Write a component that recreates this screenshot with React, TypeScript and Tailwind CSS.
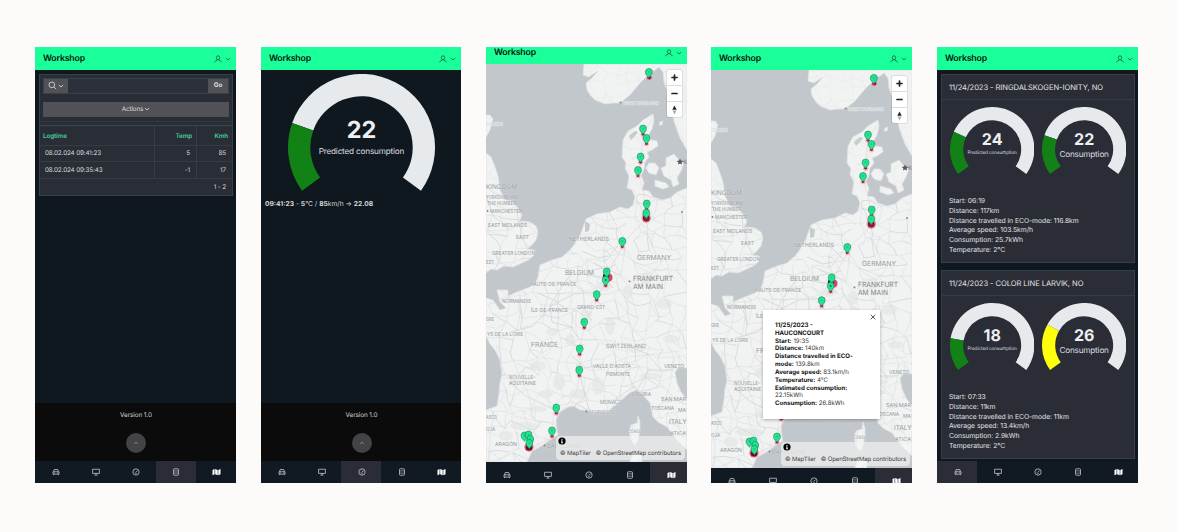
import React, { useId } from "react";

type IconName = "car" | "desktop" | "dash" | "list" | "map";

function NavIcon({ name }: { name: IconName }) {
  const common = { width: 8, height: 8, viewBox: "0 0 16 16", fill: "none", stroke: "currentColor", strokeWidth: 1.7 } as const;
  switch (name) {
    case "car":
      return (
        <svg {...common}>
          <path d="M3 7.500 4.600 3h6.800L13 7.500M2 7.500h12v4.700H2zM3.200 12v2.200M12.800 12v2.200" />
          <path d="M3.600 9.900h2M10.400 9.900h2" />
        </svg>
      );
    case "desktop":
      return (
        <svg {...common}>
          <path d="M1.200 2.500h13.600v8.300H1.200z" />
          <path d="M8 11v3M5 14.200h6" />
        </svg>
      );
    case "dash":
      return (
        <svg {...common}>
          <circle cx="8" cy="8" r="6.300" />
          <path d="M7.400 9.200 11 5.200" strokeWidth="1.800" />
          <path d="M4.400 8.600h.8M6 5.300l.5.600M6 11.300h4" strokeWidth="1.200" />
        </svg>
      );
    case "list":
      return (
        <svg {...common}>
          <rect x="3" y="1.500" width="10" height="13" rx="1.500" />
          <path d="M3 5.800h10M3 10.200h10" strokeWidth="1.300" />
        </svg>
      );
    case "map":
      return (
        <svg width={9} height={8} viewBox="0 0 18 16" fill="#fff">
          <path d="M1 4 5.200 2v10.600L1 14.400zM6.400 2l5 2v10.600l-5-2zM12.600 4 17 2v10.400l-4.400 2.200z" />
        </svg>
      );
  }
}

const NAV: IconName[] = ["car", "desktop", "dash", "list", "map"];

function BottomNav({ active, className = "h-[22px]" }: { active: IconName; className?: string }) {
  return (
    <nav className={`grid shrink-0 grid-cols-5 bg-[#111a22] text-[#b9bcc0] ${className}`}>
      {NAV.map((n) => (
        <div key={n} className={n === active ? "flex items-center justify-center bg-[#2a2d36] pl-px" : "flex items-center justify-center pl-px"}>
          <NavIcon name={n} />
        </div>
      ))}
    </nav>
  );
}

function Chevron({ up = false, className = "" }: { up?: boolean; className?: string }) {
  return (
    <svg width="6" height="6" viewBox="0 0 12 12" fill="none" stroke="currentColor" strokeWidth="1.700" className={className}>
      <path d={up ? "M2.5 7.5 6 4.3l3.5 3.2" : "M1.8 4.2 6 8l4.2-3.8"} />
    </svg>
  );
}

function Header() {
  return (
    <header className="flex h-[23px] shrink-0 items-center justify-between bg-[#1aff9a] pr-[5px] pl-[8px]">
      <span className="pt-px text-[8.800px] leading-none font-semibold tracking-[-0.2px] text-[#03150e]">Workshop</span>
      <span className="flex items-center gap-[3px] text-[#0f6b48]">
        <svg width="8" height="8" viewBox="0 0 16 16" fill="none" stroke="currentColor" strokeWidth="1.700">
          <ellipse cx="8" cy="5.500" rx="3.300" ry="4" />
          <path d="M6.300 9v1.400L2.800 12c-.8.400-1 1.400-1 2.600M9.700 9v1.400l3.500 1.600c.8.400 1 1.400 1 2.600" />
        </svg>
        <Chevron />
      </span>
    </header>
  );
}

function Footer() {
  return (
    <footer className="flex h-[58px] shrink-0 flex-col items-center bg-[#0b0b0b] pt-[8px] pl-px text-[6.400px] leading-[9px] tracking-[-0.1px] text-[#d3d4d6]">
      <span>Version 1.0</span>
      <span className="mt-[13px] flex size-[20px] items-center justify-center rounded-full bg-[#434347] text-[#8e8e92]">
        <Chevron up />
      </span>
    </footer>
  );
}

function polar(cx: number, cy: number, r: number, deg: number) {
  const a = (deg * Math.PI) / 180;
  return `${(cx + r * Math.cos(a)).toFixed(2)} ${(cy + r * Math.sin(a)).toFixed(2)}`;
}

function ringPath(cx: number, cy: number, ro: number, ri: number, from: number, to: number) {
  const large = to - from > 180 ? 1 : 0;
  return `M${polar(cx, cy, ro, from)}A${ro} ${ro} 0 ${large} 1 ${polar(cx, cy, ro, to)}L${polar(cx, cy, ri, to)}A${ri} ${ri} 0 ${large} 0 ${polar(cx, cy, ri, from)}Z`;
}

interface GaugeProps {
  value: number;
  label: string;
  size: number;
  inner: number;
  height: number;
  color: string;
  numSize: number;
  numY: number;
  labelSize: number;
  labelWidth: number;
  labelY: number;
}

function Gauge({ value, label, size, inner, height, color, numSize, numY, labelSize, labelWidth, labelY }: GaugeProps) {
  const r = size / 2;
  const start = 144;
  const split = start + (value / 100) * 252;
  return (
    <svg width={size} height={height} viewBox={`0 0 ${size} ${height}`} className="block shrink-0">
      <path d={ringPath(r, r, r, inner, split, 396)} fill="#e6eaed" />
      <path d={ringPath(r, r, r, inner, start, split)} fill={color} />
      <text x={r} y={numY} fontSize={numSize} textAnchor="middle" fontWeight="700" fill="#eeeff1">
        {value}
      </text>
      <text x={r} y={labelY} fontSize={labelSize} textAnchor="middle" textLength={labelWidth} fill="#dcdee1">
        {label}
      </text>
    </svg>
  );
}

const LAND = [
  "M98 0L97 11L103 13L107 10L112 7L106 14L100 19L101 26L105 32L109 36L119 40L127 39L134 39L139 35L144 31L149 25L154 19L159 14L162 13L164 4L168 7L173 3L177 8L178 18L181 26L182 38L186 49L188 57L191 66L194 74L201 86V0Z",
  "M0 51L4 51L7 55L5 61L4 66L0 73Z",
  "M0 89L5 93L9 103L12 112L13 119L14 126L17 132L19 136L26 137L31 143L36 151L34 156L31 158L37 157L44 158L50 162L52 168L50 176L46 181L41 185L48 186L49 190L44 195L36 199L27 203L18 202L11 206L5 205L0 209Z",
  "M167 50L168 56L166 65L162 72L165 76L171 77L172 82L166 86L161 88L163 93L159 98L158 105L155 111L158 119L156 126L163 127L167 133L176 136L184 134L191 128L201 124V304L193 303L189 308L191 319L195 328L201 336V386L191 376L181 363L172 358L167 353L164 339L157 331L151 326L145 328L141 331L134 338L127 343L121 348L114 347L107 349L100 346L94 346L88 342L82 343L74 348L70 356L71 367L72 371L64 376L54 383L46 387L41 398H0V346L11 342L13 330L14 319L16 310L14 296L9 286L4 280L0 272V234L7 236L14 246L20 244L14 238L11 226L22 226L22 232L31 228L44 223L50 218L52 213L54 201L66 196L76 193L84 186L88 181L91 176L95 169L97 163L100 155L104 153L111 150L124 148L134 143L142 145L147 141L149 133L146 126L141 124L143 112L139 104L140 99L136 93L137 76L142 67L151 62L157 56Z",
  "M163 99L169 99L173 104L170 111L163 109L160 104Z",
  "M180 94L188 90L193 96L198 99L195 107L191 114L193 120L187 123L185 116L178 112L175 104L180 102Z",
  "M169 116L180 119L183 123L177 125L169 122Z",
  "M174 58L177 57L176 61L173 61Z",
  "M152 352L154 358L154 366L152 376L149 381L145 376L143 367L145 361L151 359Z",
  "M144 398L147 389L155 390L156 398Z",
];

const ROADS = (() => {
  let seed = 7;
  const rnd = () => {
    seed = (seed * 16807) % 2147483647;
    return seed / 2147483647;
  };
  const step = 11;
  const cols = 21;
  const rows = 38;
  const px: number[][] = [];
  const py: number[][] = [];
  for (let j = 0; j < rows; j++) {
    px.push([]);
    py.push([]);
    for (let i = 0; i < cols; i++) {
      px[j].push(i * step - 4 + (rnd() - 0.5) * 11);
      py[j].push(j * step - 2 + (rnd() - 0.5) * 11);
    }
  }
  const faint: string[] = [];
  const minor: string[] = [];
  const major: string[] = [];
  const link = (x1: number, y1: number, x2: number, y2: number) => {
    const mx = (x1 + x2) / 2 + (rnd() - 0.5) * 6;
    const my = (y1 + y2) / 2 + (rnd() - 0.5) * 6;
    const target = y1 < 124 ? faint : rnd() > 0.75 ? major : minor;
    target.push(`M${x1.toFixed(1)} ${y1.toFixed(1)}Q${mx.toFixed(1)} ${my.toFixed(1)} ${x2.toFixed(1)} ${y2.toFixed(1)}`);
  };
  for (let j = 0; j < rows - 1; j++) {
    for (let i = 0; i < cols - 1; i++) {
      if (rnd() > 0.18) link(px[j][i], py[j][i], px[j][i + 1], py[j][i + 1]);
      if (rnd() > 0.18) link(px[j][i], py[j][i], px[j + 1][i], py[j + 1][i]);
      if (rnd() > 0.7) link(px[j][i], py[j][i], px[j + 1][i + 1], py[j + 1][i + 1]);
    }
  }
  return { faint: faint.join(""), minor: minor.join(""), major: major.join("") };
})();

const WOODS: [number, number, number, number][] = [
  [52, 302, 8, 5], [73, 318, 6, 8], [92, 330, 9, 5], [112, 322, 6, 9], [60, 330, 7, 4],
  [124, 262, 5, 9], [84, 276, 5, 6], [150, 285, 9, 4], [165, 312, 12, 3], [118, 222, 7, 5],
  [142, 228, 5, 7], [160, 214, 6, 6], [178, 240, 8, 5], [38, 362, 14, 4], [20, 372, 7, 5],
  [66, 268, 6, 4], [100, 250, 6, 4], [185, 275, 8, 4], [52, 345, 9, 3],
];

const LABELS: { t: string; x: number; y: number; s?: number; c?: string; w?: number }[] = [
  { t: "KRISTIANSAND", x: 137, y: 41, s: 5, w: 36, c: "#dcdfe1" },
  { t: "ERDEEN", x: 0, y: 62, s: 5.5, c: "#dcdfe1", w: 17 },
  { t: "KINGDOM", x: 0, y: 124.5, s: 6.5, w: 31 },
  { t: "YORKSHIRE AND", x: 0, y: 135, w: 33 },
  { t: "THE HUMBER", x: 1, y: 141, w: 29 },
  { t: "MANCHESTER", x: 4, y: 149, w: 32 },
  { t: "EAST MIDLANDS", x: 2, y: 162.5, w: 39 },
  { t: "EAST", x: 30, y: 175, w: 13 },
  { t: "GREATER LONDON", x: 6, y: 190.5, w: 43 },
  { t: "EST", x: 0, y: 200, w: 8 },
  { t: "NETHERLANDS", x: 83, y: 177, s: 5.9, w: 40 },
  { t: "BELGIUM", x: 79, y: 210.5, s: 6.9, w: 29 },
  { t: "GERMANY", x: 151, y: 195.5, s: 7, w: 34 },
  { t: "FRANKFURT", x: 147, y: 216.5, s: 7.1, w: 40, c: "#7f8487" },
  { t: "AM MAIN", x: 147, y: 224.5, s: 7.1, w: 30, c: "#7f8487" },
  { t: "HAUTS-DE-FRANCE", x: 44, y: 221.5, w: 46 },
  { t: "NORMANDIE", x: 16, y: 238.5, w: 29 },
  { t: "ÎLE-DE-FRANCE", x: 45, y: 247.5, w: 37 },
  { t: "GRAND-EST", x: 91, y: 245, w: 28 },
  { t: "GNE", x: 0, y: 257, w: 8 },
  { t: "YS DE LA LOIRE", x: 1, y: 272, w: 36 },
  { t: "FRANCE", x: 45, y: 282.5, s: 7, w: 27 },
  { t: "SWITZERLAND", x: 120, y: 283.5, s: 5.9, w: 40 },
  { t: "VALLE D'AOSTA", x: 107, y: 304, w: 38 },
  { t: "PIEMONTE", x: 120, y: 312, w: 24 },
  { t: "VENETO", x: 178, y: 304, w: 20 },
  { t: "NOUVELLE-", x: 23, y: 314.5, w: 26 },
  { t: "AQUITAINE", x: 23, y: 320.5, w: 27 },
  { t: "LIGURIA", x: 146, y: 331.5, w: 19 },
  { t: "MONACO", x: 114, y: 340, w: 22, s: 5.9 },
  { t: "SAN MAR", x: 175, y: 337, w: 25 },
  { t: "MARSEILLE", x: 103, y: 349.5, s: 5.6, w: 26, c: "#a9adb0" },
  { t: "TOSCANA", x: 165, y: 346, w: 23 },
  { t: "MA", x: 192, y: 348, w: 8 },
  { t: "ASCO", x: 0, y: 354.5, w: 11 },
  { t: "ITALY", x: 183, y: 360, s: 7, w: 17.5 },
  { t: "OJA", x: 0, y: 366.5, w: 9 },
  { t: "CORSE", x: 142, y: 368.5, s: 4.6, w: 13 },
  { t: "ATICA", x: 184, y: 371, w: 16, s: 5 },
  { t: "ARAGÓN", x: 9, y: 382, w: 22 },
  { t: "BARCELONA", x: 61, y: 383.5, s: 5.8, w: 34 },
];

const DOTS: [number, number][] = [[134.5, 38.5], [1.5, 147], [143.5, 217.5], [100.5, 347.5], [58.5, 381.5], [196, 148]];

const PINS: [number, number][] = [
  [162.8, 8.5], [157, 65], [160.5, 74.5], [154.6, 93], [152, 106.5], [160.7, 140], [160.3, 149.3],
  [136.3, 177.5], [120.7, 208], [119.7, 216.3], [110.7, 230.7], [98.3, 258.3], [93.7, 285],
  [93.3, 306.3], [70.3, 344], [66, 367],
];

const CLUSTER: [number, number][] = [[38.5, 372], [42.5, 371], [44.3, 375.5], [43.3, 379.5]];

function Pin({ x, y }: { x: number; y: number }) {
  return (
    <g transform={`translate(${x} ${y})`}>
      <path
        d="M0 5.300C-1.100 3.500-3.400 2.500-3.400-.5A3.400 3.500 0 0 1 3.400-.5C3.400 2.500 1.100 3.500 0 5.300Z"
        fill="#22e591"
        stroke="#12805a"
        strokeWidth=".6"
      />
      <circle cx="0" cy="-.5" r="1" fill="#1bc97f" />
    </g>
  );
}

function EuropeMap() {
  const clip = useId();
  const land = LAND.join("");
  return (
    <svg width="201" height="398" viewBox="0 0 201 398" className="block">
      <defs>
        <clipPath id={clip}>
          <path d={land} />
        </clipPath>
      </defs>
      <rect width="201" height="398" fill="#c2c7cb" />
      <path d={land} fill="#f1f2f2" stroke="#dfe2e4" strokeWidth=".8" strokeLinejoin="round" />
      <g clipPath={`url(#${clip})`}>
        {WOODS.map(([x, y, rx, ry], i) => (
          <ellipse key={i} cx={x} cy={y} rx={rx} ry={ry} fill="#e7ebe8" />
        ))}
        <g fill="none">
          <path d={ROADS.faint} stroke="#e9ebeb" strokeWidth=".6" />
          <path d={ROADS.minor} stroke="#e1e3e4" strokeWidth=".8" />
          <path d={ROADS.major} stroke="#d9dcde" strokeWidth="1" />
          <path d="M166 55L157 70L155 95L153 112L158 130L160 155M145 95L155 92" stroke="#edd5d7" strokeWidth=".7" />
          <path
            d="M160 155C150 168 140 172 136 184C130 196 123 203 120 216C116 226 112 232 110 238C104 252 98 256 98 266C94 276 94 284 94 296C96 306 92 316 91 326C86 338 76 344 71 352C71 362 67 370 64 375L44 384"
            stroke="#efd5d8"
            strokeWidth=".8"
          />
          <path d="M114 173L124 181L133 190M96 187L112 194L122 192M108 199L120 206L130 200M101 211L118 214L127 224" stroke="#d5d9dc" strokeWidth="1" />
          <path
            d="M52 229L70 237L82 248M64 242L66 258L88 264M66 242L47 262L25 268M64 242L88 230L113 228M64 242L76 222L88 206M86 292L100 304L117 300M103 345L96 320L93 300M151 326L163 306L188 306M23 318L40 332L73 348"
            stroke="#d7dadc"
            strokeWidth="1"
          />
          <path d="M28 352L50 357L68 359M119 338L118 318L124 300L143 293L168 290L195 287" stroke="#cbd0d3" strokeWidth=".5" strokeDasharray="2 1" />
        </g>
      </g>
      <path d="M99 157l5 3-1 7-4 1zM143 72l6-5 3 1-3 4-4 4z" fill="#c6cbce" />
      {LABELS.map((l) => (
        <text
          key={l.t}
          x={l.x}
          y={l.y}
          fontSize={l.s ?? 5.4}
          textLength={l.w}
          lengthAdjust="spacingAndGlyphs"
          fill={l.c ?? "#969b9e"}
          stroke="#f2f3f3"
          strokeOpacity=".5"
          strokeWidth=".7"
          paintOrder="stroke"
        >
          {l.t}
        </text>
      ))}
      {DOTS.map(([x, y]) => (
        <circle key={x} cx={x} cy={y} r="1" fill="#85898c" />
      ))}
      <path d="M194 94.600l1 2 2.200.3-1.600 1.500.4 2.200-2-1-2 1 .4-2.200-1.600-1.500 2.200-.3z" fill="#55595c" />
      <text x="197" y="99.500" fontSize="6" fill="#777b7e">
        K
      </text>
      <circle cx="160.300" cy="154" r="4.800" fill="#e03353" opacity=".5" />
      <circle cx="160.300" cy="154.300" r="3.300" fill="#6b0c22" />
      <circle cx="43" cy="383" r="4.600" fill="#e0224a" opacity=".65" />
      <circle cx="43" cy="383.300" r="3.300" fill="#6b0c22" />
      <circle cx="122.500" cy="213.500" r="4" fill="#d01c44" opacity=".8" />
      <circle cx="120" cy="212.500" r="3.200" fill="#2c1f24" />
      <circle cx="163.500" cy="13.500" r="2" fill="#8c1533" />
      {PINS.map(([x, y]) => (
        <g key={`${x}-${y}`}>
          <circle cx={x} cy={y + 5.2} r="2.600" fill="#f4385f" opacity=".28" />
          <circle cx={x} cy={y + 5.2} r="1.400" fill="#a3173a" />
          <Pin x={x} y={y} />
        </g>
      ))}
      {CLUSTER.map(([x, y]) => (
        <Pin key={`${x}-${y}`} x={x} y={y} />
      ))}
      <circle cx="119.700" cy="216" r=".8" fill="#0b3b28" />
    </svg>
  );
}

function MapView() {
  return (
    <div className="relative h-[398px] w-[201px] shrink-0 overflow-hidden">
      <EuropeMap />
      <div className="absolute top-[6px] right-[5px] flex w-[15px] flex-col divide-y divide-[#dcdcdc] rounded-[2px] bg-white shadow-[0_0_0_1px_rgba(0,0,0,0.08)]">
        <span className="flex h-[16px] items-center justify-center">
          <svg width="7" height="7" viewBox="0 0 7 7" stroke="#222" strokeWidth="1.700" strokeLinecap="round">
            <path d="M1 3.500h5M3.500 1v5" />
          </svg>
        </span>
        <span className="flex h-[16px] items-center justify-center">
          <svg width="7" height="7" viewBox="0 0 7 7" stroke="#222" strokeWidth="1.700" strokeLinecap="round">
            <path d="M1 3.500h5" />
          </svg>
        </span>
        <span className="flex h-[15px] items-center justify-center">
          <svg width="7" height="10" viewBox="0 0 7 10">
            <path d="M3.500 .4 5.700 4.800H1.300z" fill="#222" />
            <path d="M3.500 9.400 5.500 5.400H1.500z" fill="#aaa" />
          </svg>
        </span>
      </div>
      <div className="absolute right-[2px] bottom-[2px] flex h-[24px] w-[129px] flex-col justify-between rounded-[4px] bg-[#f7f7f7]/60 pt-[1px] pb-[2px] pl-[4px] text-[6px] leading-[9px] tracking-[-0.1px] text-[#3f4143]">
        <svg width="8" height="8" viewBox="0 0 16 16" className="-ml-[2px]">
          <circle cx="8" cy="8" r="7.200" fill="#000" />
          <circle cx="8" cy="4.600" r="1.300" fill="#fff" />
          <path d="M6 7h3v4.200h1.200v1.300H6v-1.300h1V8.300H6z" fill="#fff" />
        </svg>
        <div className="flex gap-[5px] whitespace-nowrap">
          <span>© MapTiler</span>
          <span>© OpenStreetMap contributors</span>
        </div>
      </div>
    </div>
  );
}

const POPUP: [string, string][] = [
  ["Start:", "19:35"],
  ["Distance:", "140km"],
  ["Distance travelled in ECO-mode:", "139.8km"],
  ["Average speed:", "83.1km/h"],
  ["Temperature:", "4°C"],
  ["Estimated consumption:", "22.15kWh"],
  ["Consumption:", "26.8kWh"],
];

function Popup() {
  return (
    <div className="absolute top-[263px] left-[52px] h-[109px] w-[117px] bg-white pt-[12px] pr-[24px] pl-[12px] text-[6.100px] leading-[7.820px] text-[#333] shadow-[0_1px_3px_rgba(0,0,0,0.3)]">
      <svg width="6" height="6" viewBox="0 0 6 6" stroke="#333" strokeWidth=".8" className="absolute top-[4px] right-[4px]">
        <path d="M.7.700l4.600 4.600M5.300.700.700 5.300" />
      </svg>
      <p className="font-bold text-[#111]">
        11/25/2023 -<br />
        HAUCONCOURT
      </p>
      {POPUP.map(([k, v]) => (
        <p key={k}>
          <b className="text-[#111]">{k}</b> {v}
        </p>
      ))}
    </div>
  );
}

function Phone({ className, children }: { className: string; children: React.ReactNode }) {
  return <section className={`relative flex h-[436px] shrink-0 flex-col overflow-hidden bg-[#0f181f] ${className}`}>{children}</section>;
}

function LogTable() {
  return (
    <div className="mx-[4px] mt-[4px] flex h-[122px] w-[194px] flex-col border border-[#3a3e46] bg-[#292d35] text-[6.300px] tracking-[-0.12px] text-[#dadcde]">
      <div className="mx-[3px] mt-[3px] flex h-[16px] border border-[#39404a]">
        <span className="flex w-[24px] items-center justify-center gap-px bg-[#505257]">
          <svg width="9" height="9" viewBox="0 0 16 16" fill="none" stroke="currentColor" strokeWidth="1.500">
            <circle cx="6.800" cy="6.800" r="5" />
            <path d="m10.600 10.600 4 4" />
          </svg>
          <Chevron />
        </span>
        <span className="flex-1 bg-[#2b303a]" />
        <span className="flex w-[20px] items-center justify-center bg-[#505257] font-bold">Go</span>
      </div>
      <div className="mx-[3px] mt-[8px] flex h-[16px] items-center justify-center gap-px rounded-[1px] bg-[#505257]">
        Actions <Chevron />
      </div>
      <div className="mt-[4px] h-[4px] border-t border-[#333740]" />
      <div className="grid h-[70px] grid-cols-[115px_42px_1fr] grid-rows-[19px_16px_17px_18px] border-t border-[#3c414a] [&>span]:flex [&>span]:items-center">
        <span className="border-r border-[#363b44] pt-[2px] pl-[3px] font-semibold text-[#45cf9b]">Logtime</span>
        <span className="justify-end border-r border-[#363b44] pt-[2px] pr-[4px] font-semibold text-[#45cf9b]">Temp</span>
        <span className="justify-end pt-[2px] pr-[4px] font-semibold text-[#45cf9b]">Kmh</span>
        <span className="border-t border-r border-[#363b44] pt-px pl-[5px]">08.02.024 09:41:23</span>
        <span className="justify-end border-t border-r border-[#363b44] pt-px pr-[6px]">5</span>
        <span className="justify-end border-t border-[#363b44] pt-px pr-[6px]">85</span>
        <span className="border-t border-r border-[#363b44] pt-px pl-[5px]">08.02.024 09:35:43</span>
        <span className="justify-end border-t border-r border-[#363b44] pt-px pr-[6px]">-1</span>
        <span className="justify-end border-t border-[#363b44] pt-px pr-[6px]">17</span>
        <span className="col-span-3 justify-end border-t border-[#363b44] pr-[6px]">1 - 2</span>
      </div>
    </div>
  );
}

interface Trip {
  title: string;
  predicted: number;
  actual: number;
  color: string;
  lines: string[];
}

const TRIPS: Trip[] = [
  {
    title: "11/24/2023 - RINGDALSKOGEN-IONITY, NO",
    predicted: 24,
    actual: 22,
    color: "#128216",
    lines: ["Start: 06:19", "Distance: 117km", "Distance travelled in ECO-mode: 116.8km", "Average speed: 103.5km/h", "Consumption: 25.7kWh", "Temperature: 2°C"],
  },
  {
    title: "11/24/2023 - COLOR LINE LARVIK, NO",
    predicted: 18,
    actual: 26,
    color: "#ffff0a",
    lines: ["Start: 07:33", "Distance: 11km", "Distance travelled in ECO-mode: 11km", "Average speed: 13.4km/h", "Consumption: 2.9kWh", "Temperature: 2°C"],
  },
];

function TripCard({ trip }: { trip: Trip }) {
  const base = { size: 84.4, inner: 29, height: 68, numSize: 16, numY: 38.3 };
  return (
    <article className="h-[189px] w-[194px] shrink-0 border border-[#3a3e46] bg-[#2a2d35] text-[#e1e3e5]">
      <h2 className="flex h-[25px] items-center border-b border-[#363b44] pt-px pl-[7px] text-[7.600px] tracking-[-0.08px] whitespace-nowrap">{trip.title}</h2>
      <div className="flex gap-[8px] pt-[7px] pl-[7.600px]">
        <Gauge {...base} value={trip.predicted} color="#128216" label="Predicted consumption" labelSize={4.75} labelWidth={49.5} labelY={47} />
        <Gauge {...base} value={trip.actual} color={trip.color} label="Consumption" labelSize={8.2} labelWidth={49.5} labelY={50.5} />
      </div>
      <ul className="mt-[21px] pl-[7px] text-[6.800px] leading-[9.770px] tracking-[-0.05px] whitespace-nowrap">
        {trip.lines.map((l) => (
          <li key={l}>{l}</li>
        ))}
      </ul>
    </article>
  );
}

export default function App() {
  return (
    <main className="flex h-[532px] w-[1177px] overflow-hidden bg-[#fdfbf9] pt-[47px] pl-[35px] font-['Inter',sans-serif] [text-rendering:geometricPrecision]">
      <Phone className="w-[201px]">
        <Header />
        <LogTable />
        <div className="flex-1" />
        <Footer />
        <BottomNav active="list" />
      </Phone>

      <Phone className="ml-[25px] w-[200px]">
        <Header />
        <div className="flex flex-1 flex-col pt-[4px]">
          <div className="flex justify-center">
            <Gauge value={22} label="Predicted consumption" size={147} inner={51.2} height={118} color="#128216" numSize={23.5} numY={63.5} labelSize={8.2} labelWidth={85.7} labelY={79.5} />
          </div>
          <p className="mt-[7px] pl-[4px] text-[6.700px] leading-[10px] text-[#d3d5d8]">
            <b>09:41:23</b> - <b>5</b>°C / <b>85</b>km/h → <b>22.08</b>
          </p>
        </div>
        <Footer />
        <BottomNav active="dash" />
      </Phone>

      <Phone className="ml-[25px] w-[201px]">
        <div className="-mt-[6px] flex flex-col">
          <Header />
          <MapView />
          <BottomNav active="map" className="h-[26px] w-[205.500px]" />
        </div>
      </Phone>

      <Phone className="ml-[24px] w-[201px]">
        <Header />
        <MapView />
        <BottomNav active="map" className="h-[26px] w-[205.500px]" />
        <Popup />
      </Phone>

      <Phone className="ml-[25px] w-[201px]">
        <Header />
        <div className="flex flex-1 flex-col gap-[7px] pt-[4px] pl-[4px]">
          {TRIPS.map((t) => (
            <TripCard key={t.title} trip={t} />
          ))}
        </div>
        <BottomNav active="car" />
      </Phone>
    </main>
  );
}
